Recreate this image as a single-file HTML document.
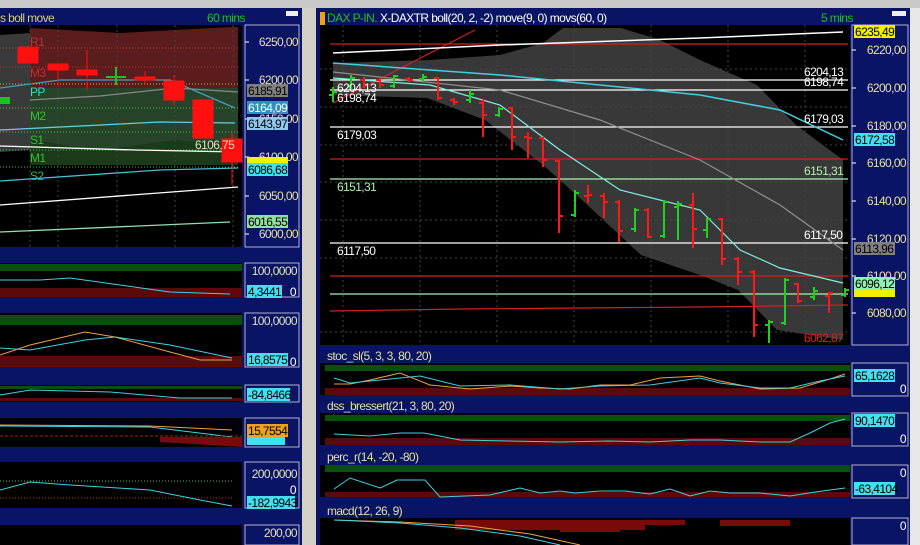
<!DOCTYPE html>
<html><head><meta charset="utf-8"><style>
html,body{margin:0;padding:0;background:#d4d0c8;width:920px;height:545px;overflow:hidden}
svg{display:block}
text{font-family:"Liberation Sans",Arial,sans-serif;font-size:12px;letter-spacing:-0.6px}
</style></head><body>
<svg width="920" height="545" viewBox="0 0 920 545" xmlns="http://www.w3.org/2000/svg">
<rect x="0" y="0" width="920" height="545" fill="#d4d0c8"/>
<rect x="0" y="0" width="920" height="8" fill="#c8c8c8"/>
<rect x="0" y="8" width="302" height="537" fill="#0a1464"/>
<rect x="316" y="8" width="594" height="537" fill="#0a1464"/>
<rect x="302" y="8" width="14" height="537" fill="#d4d0c8"/>
<rect x="910" y="8" width="10" height="537" fill="#e8e8e8"/>
<rect x="286" y="11" width="12" height="5" fill="#eee"/>
<rect x="892" y="11" width="14" height="5" fill="#eee"/>

<!-- LEFT MAIN -->
<text x="0" y="22" fill="#d8d070">s boll move</text>
<text x="207" y="22" fill="#20c020">60 mins</text>
<rect x="0" y="25" width="242" height="222" fill="#000"/>
<polygon points="0,35 30,33 30,150 0,152" fill="#3a3a3a"/>
<polygon points="30,28 120,33 175,30 232,27 238,27 238,88 30,88" fill="#5a1c1c"/>
<polygon points="30,88 238,88 238,165 30,165" fill="#27442a"/>
<polygon points="30,140 100,150 175,140 238,145 238,165 30,165" fill="#1a3a1a"/>
<g stroke="#444" stroke-dasharray="2,3">
<line x1="30" y1="25" x2="30" y2="247"/><line x1="58" y1="25" x2="58" y2="247"/><line x1="117" y1="25" x2="117" y2="247"/><line x1="175" y1="25" x2="175" y2="247"/><line x1="233" y1="25" x2="233" y2="247"/>
</g>
<g stroke-dasharray="1,2">
<line x1="0" y1="48" x2="240" y2="48" stroke="#c03030"/>
<line x1="0" y1="67" x2="240" y2="67" stroke="#c03030"/>
<line x1="0" y1="84" x2="240" y2="84" stroke="#c0c040"/>
<line x1="0" y1="108" x2="240" y2="108" stroke="#40c040"/>
<line x1="0" y1="132" x2="240" y2="132" stroke="#40c040"/>
<line x1="0" y1="150" x2="240" y2="150" stroke="#40c040"/>
<line x1="0" y1="167" x2="240" y2="167" stroke="#40c040"/>
</g>
<text x="30" y="46" fill="#c03030">R1</text>
<text x="30" y="77" fill="#c03030">M3</text>
<text x="30" y="96" fill="#40d0d0">PP</text>
<text x="30" y="120" fill="#30c030">M2</text>
<text x="30" y="144" fill="#30c030">S1</text>
<text x="30" y="162" fill="#30c030">M1</text>
<text x="30" y="180" fill="#30c030">S2</text>
<g fill="none" stroke-width="1.3">
<polyline points="0,88 60,80 170,80 235,108" stroke="#40a0c0"/>
<polyline points="30,100 100,96 175,88 238,92" stroke="#888"/>
<polyline points="0,130 160,122 235,123" stroke="#60d0e0"/>
<polyline points="0,146 135,150 238,152" stroke="#fff"/>
<polyline points="0,181 160,170 238,168" stroke="#40c0d0"/>
<polyline points="0,205 238,187" stroke="#fff"/>
<polyline points="0,232 230,222" stroke="#90e0b0"/>
</g>
<rect x="0" y="97" width="10" height="7" fill="#20c020"/>
<g fill="#ff1010" stroke="#ff1010">
<rect x="18" y="47" width="20" height="16"/>
<line x1="58" y1="64" x2="58" y2="85"/><rect x="48" y="64" width="20" height="6"/>
<line x1="87" y1="50" x2="87" y2="90"/><rect x="77" y="70" width="20" height="5"/>
<line x1="145" y1="71" x2="145" y2="85"/><rect x="135" y="77" width="20" height="3"/>
<line x1="174" y1="75" x2="174" y2="105"/><rect x="164" y="81" width="20" height="19"/>
<rect x="193" y="100" width="20" height="38"/>
<line x1="232" y1="133" x2="232" y2="185"/><rect x="222" y="139" width="20" height="23"/>
</g>
<g stroke="#20c020" stroke-width="2"><line x1="106" y1="77" x2="126" y2="77"/><line x1="116" y1="67" x2="116" y2="85"/></g>
<text x="195" y="149" fill="#e0e0c0">6106,75</text>
<rect x="245" y="25" width="54" height="222" fill="#0a1464" stroke="#b0b0d0"/>
<g stroke="#fff"><line x1="245" y1="42" x2="249" y2="42"/><line x1="245" y1="80" x2="249" y2="80"/><line x1="245" y1="119" x2="249" y2="119"/><line x1="245" y1="157" x2="249" y2="157"/><line x1="245" y1="196" x2="249" y2="196"/><line x1="245" y1="234" x2="249" y2="234"/></g>
<g fill="#e8e0a0" text-anchor="end"><text x="298" y="46">6250,00</text><text x="298" y="84">6200,00</text><text x="298" y="123">6150,00</text><text x="298" y="161">6100,00</text><text x="298" y="200">6050,00</text><text x="298" y="238">6000,00</text></g>
<rect x="247" y="84" width="41" height="13" fill="#808080"/><text x="248" y="95" fill="#000">6185,91</text>
<rect x="247" y="101" width="41" height="13" fill="#3090c0"/><text x="248" y="112" fill="#fff">6164,09</text>
<rect x="247" y="117" width="41" height="13" fill="#90c8f0"/><text x="248" y="128" fill="#000">6143,97</text>
<rect x="247" y="157" width="41" height="6" fill="#f0f000"/>
<rect x="247" y="163" width="41" height="13" fill="#40e0f0"/><text x="248" y="174" fill="#000">6086,68</text>
<rect x="247" y="215" width="41" height="13" fill="#90e0a0"/><text x="248" y="226" fill="#000">6016,55</text>

<!-- left subpanels -->
<rect x="0" y="263" width="242" height="34" fill="#000"/>
<rect x="0" y="264" width="242" height="7" fill="#0a500a"/><rect x="0" y="288" width="242" height="9" fill="#5a0a0a"/>
<polyline points="0,280 40,280 70,278 120,285 170,292 230,294" fill="none" stroke="#40d0e0"/>
<rect x="245" y="263" width="54" height="34" fill="#0a1464" stroke="#b0b0d0"/>
<text x="297" y="275" fill="#e0e0c0" text-anchor="end">100,0000</text>
<rect x="247" y="285" width="35" height="13" fill="#40e0f0"/><text x="248" y="296" fill="#000">4,3441</text><text x="296" y="296" fill="#fff" text-anchor="end">0</text>

<rect x="0" y="313" width="242" height="54" fill="#000"/>
<rect x="0" y="315" width="242" height="10" fill="#0a500a"/><rect x="0" y="356" width="242" height="11" fill="#5a0a0a"/>
<polyline points="0,355 30,345 85,332 115,337 170,352 200,360 232,360" fill="none" stroke="#f0a040"/>
<polyline points="0,348 30,350 85,340 115,337 170,345 232,358" fill="none" stroke="#40d0e0"/>
<rect x="245" y="313" width="54" height="54" fill="#0a1464" stroke="#b0b0d0"/>
<text x="297" y="325" fill="#e0e0c0" text-anchor="end">100,0000</text>
<rect x="247" y="353" width="41" height="13" fill="#40e0f0"/><text x="248" y="364" fill="#000">16,8575</text><text x="296" y="366" fill="#fff" text-anchor="end">0</text>

<rect x="0" y="385" width="242" height="17" fill="#000"/>
<rect x="0" y="386" width="242" height="3" fill="#0a500a"/><rect x="0" y="398" width="242" height="3" fill="#5a0a0a"/>
<polyline points="0,395 30,390 110,392 180,398 232,398" fill="none" stroke="#40d0e0"/>
<rect x="245" y="385" width="54" height="17" fill="#0a1464" stroke="#b0b0d0"/>
<rect x="247" y="388" width="43" height="13" fill="#40e0f0"/><text x="248" y="399" fill="#000">-84,8466</text>

<rect x="0" y="418" width="242" height="29" fill="#000"/>
<polyline points="0,425 150,426 232,430" fill="none" stroke="#f0a040"/>
<polyline points="0,426 150,427 232,437" fill="none" stroke="#40d0e0"/>
<line x1="0" y1="436" x2="242" y2="436" stroke="#a02020" stroke-dasharray="3,2"/>
<polygon points="160,437 242,437 242,447 160,442" fill="#7a0a0a"/>
<rect x="245" y="418" width="54" height="29" fill="#0a1464" stroke="#b0b0d0"/>
<rect x="247" y="424" width="41" height="13" fill="#f0a020"/><text x="248" y="435" fill="#000">15,7554</text>
<rect x="247" y="437" width="38" height="8" fill="#40e0f0"/>

<rect x="0" y="462" width="242" height="46" fill="#000"/>
<line x1="0" y1="481" x2="232" y2="481" stroke="#60c060" stroke-dasharray="1,2"/>
<line x1="0" y1="498" x2="232" y2="498" stroke="#c03030" stroke-dasharray="1,2"/>
<polyline points="0,490 30,482 70,485 150,490 200,500 232,506" fill="none" stroke="#40d0e0"/>
<rect x="245" y="462" width="54" height="46" fill="#0a1464" stroke="#b0b0d0"/>
<text x="297" y="478" fill="#e0e0c0" text-anchor="end">200,0000</text><text x="296" y="494" fill="#fff" text-anchor="end">0</text>
<rect x="247" y="496" width="48" height="13" fill="#40e0f0"/><text x="248" y="507" fill="#000">-182,9943</text>

<rect x="0" y="525" width="242" height="20" fill="#000"/>
<rect x="245" y="525" width="54" height="20" fill="#0a1464" stroke="#b0b0d0"/>
<text x="297" y="537" fill="#e0e0c0" text-anchor="end">200,00</text>

<!-- RIGHT MAIN -->
<rect x="320" y="12" width="5" height="13" fill="#f0a020"/>
<text x="327" y="22" fill="#20c020">DAX P-IN.</text><text x="380" y="22" fill="#fff">X-DAXTR boll(20, 2, -2) move(9, 0) movs(60, 0)</text>
<text x="821" y="22" fill="#20c020">5 mins</text>
<rect x="320" y="25" width="530" height="320" fill="#000"/>
<polygon points="333,63 430,60 500,55 543,43 563,28 600,28 621,28 660,40 700,60 757,85 796,125 843,160 843,340 777,330 738,290 700,275 641,255 582,200 543,165 485,120 427,98 333,95" fill="rgb(56,56,56)" style="fill:rgb(56,56,56)"/>
<g stroke="#444" stroke-dasharray="2,3">
<line x1="343" y1="25" x2="343" y2="345"/><line x1="420" y1="25" x2="420" y2="345"/><line x1="497" y1="25" x2="497" y2="345"/><line x1="574" y1="25" x2="574" y2="345"/><line x1="651" y1="25" x2="651" y2="345"/><line x1="728" y1="25" x2="728" y2="345"/><line x1="805" y1="25" x2="805" y2="345"/>
<line x1="320" y1="69" x2="850" y2="69"/><line x1="320" y1="107" x2="850" y2="107"/><line x1="320" y1="145" x2="850" y2="145"/><line x1="320" y1="182" x2="850" y2="182"/><line x1="320" y1="220" x2="850" y2="220"/><line x1="320" y1="258" x2="850" y2="258"/><line x1="320" y1="332" x2="850" y2="332"/>
</g>
<g fill="none" stroke-width="1.2">
<line x1="330" y1="44" x2="848" y2="44" stroke="#d02020"/>
<line x1="330" y1="80" x2="848" y2="80" stroke="#fff"/>
<line x1="330" y1="90" x2="848" y2="90" stroke="#fff"/>
<line x1="330" y1="127" x2="848" y2="127" stroke="#fff"/>
<line x1="330" y1="159" x2="848" y2="159" stroke="#d02020"/>
<line x1="330" y1="179" x2="848" y2="179" stroke="#b0f0b0"/>
<line x1="330" y1="243" x2="848" y2="243" stroke="#fff"/>
<line x1="330" y1="276" x2="848" y2="276" stroke="#d02020"/>
<line x1="330" y1="294" x2="848" y2="294" stroke="#b0f0b0"/>
<polyline points="330,311 460,309 700,307 848,305" stroke="#d02020"/>
<line x1="333" y1="103" x2="475" y2="30" stroke="#d02020"/>
<polyline points="333,53 500,45 700,38 843,32" stroke="#fff" stroke-width="1.5"/>
<polyline points="333,63 500,75 700,95 780,110 843,140" stroke="#40d0e0" stroke-width="1.5"/>
<polyline points="333,72 500,90 600,120 700,160 780,205 843,250" stroke="#909090"/>
<polyline points="333,78 430,85 500,105 560,150 620,190 700,210 740,250 780,268 843,283" stroke="#80f0e0"/>
</g>
<g stroke-width="2" fill="none">
<g stroke="#20d020">
<path d="M333 87V102M329 95h4M333 92h4"/><path d="M351 75V90M347 86h4M351 78h4"/><path d="M394 75V88M390 86h4M394 76h4"/><path d="M423 74V82M419 79h4M423 77h4"/><path d="M470 90V103M466 100h4M470 94h4"/><path d="M499 107V117M495 115h4M499 109h4"/><path d="M575 190V217M571 215h4M575 193h4"/><path d="M635 208V232M631 229h4M635 210h4"/><path d="M664 200V238M660 236h4M664 202h4"/><path d="M678 201V240M674 207h4M678 204h4"/><path d="M707 218V238M703 230h4M707 219h4"/><path d="M769 320V343M765 325h4M769 322h4"/><path d="M785 278V325M781 323h4M785 280h4"/><path d="M814 287V300M810 297h4M814 291h4"/><path d="M845 288V297M841 295h4M845 290h4"/>
</g>
<g stroke="#ff1818">
<path d="M364 77V88M360 80h4M364 85h4"/><path d="M380 78V88M376 80h4M380 85h4"/><path d="M409 77V82M405 79h4M409 80h4"/><path d="M438 77V100M434 78h4M438 98h4"/><path d="M454 98V105M450 100h4M454 102h4"/><path d="M483 100V137M479 103h4M483 115h4"/><path d="M512 107V150M508 108h4M512 137h4"/><path d="M528 132V158M524 137h4M528 138h4"/><path d="M543 137V167M539 138h4M543 160h4"/><path d="M559 160V233M555 161h4M559 216h4"/><path d="M588 185V203M584 196h4M588 195h4"/><path d="M604 193V218M600 196h4M604 202h4"/><path d="M619 200V242M615 202h4M619 231h4"/><path d="M648 208V238M644 210h4M648 237h4"/><path d="M693 193V248M689 205h4M693 229h4"/><path d="M722 218V265M718 219h4M722 259h4"/><path d="M738 257V285M734 259h4M738 272h4"/><path d="M754 270V337M750 272h4M754 325h4"/><path d="M798 283V303M794 284h4M798 301h4"/><path d="M829 292V313M825 296h4M829 293h4"/>
</g>
</g>
<g fill="#fff"><text x="337" y="92">6204,13</text><text x="337" y="102">6198,74</text><text x="337" y="139">6179,03</text><text x="804" y="76">6204,13</text><text x="804" y="86">6198,74</text><text x="804" y="123">6179,03</text><text x="337" y="255">6117,50</text><text x="804" y="239">6117,50</text></g>
<g fill="#b0f0b0"><text x="337" y="191">6151,31</text><text x="804" y="175">6151,31</text></g>
<text x="804" y="342" fill="#e02020">6062,87</text>
<rect x="852" y="25" width="56" height="320" fill="#0a1464" stroke="#b0b0d0"/>
<g stroke="#fff"><line x1="852" y1="50" x2="856" y2="50"/><line x1="852" y1="88" x2="856" y2="88"/><line x1="852" y1="126" x2="856" y2="126"/><line x1="852" y1="163" x2="856" y2="163"/><line x1="852" y1="201" x2="856" y2="201"/><line x1="852" y1="239" x2="856" y2="239"/><line x1="852" y1="276" x2="856" y2="276"/><line x1="852" y1="313" x2="856" y2="313"/></g>
<g fill="#e8e0a0" text-anchor="end"><text x="906" y="54">6220,00</text><text x="906" y="92">6200,00</text><text x="906" y="130">6180,00</text><text x="906" y="167">6160,00</text><text x="906" y="205">6140,00</text><text x="906" y="243">6120,00</text><text x="906" y="280">6100,00</text><text x="906" y="317">6080,00</text></g>
<rect x="854" y="25" width="41" height="13" fill="#f0f000"/><text x="855" y="36" fill="#000">6235,49</text>
<rect x="854" y="133" width="41" height="13" fill="#40e0f0"/><text x="855" y="144" fill="#000">6172,58</text>
<rect x="854" y="242" width="41" height="13" fill="#808080"/><text x="855" y="253" fill="#000">6113,96</text>
<rect x="854" y="285" width="41" height="12" fill="#f0f000"/>
<rect x="854" y="277" width="41" height="13" fill="#90f0b0"/><text x="855" y="288" fill="#000">6096,12</text>

<!-- right subpanels -->
<text x="327" y="360" fill="#e0e0a0">stoc_sl(5, 3, 3, 80, 20)</text>
<rect x="320" y="363" width="530" height="32" fill="#000"/>
<rect x="325" y="365" width="525" height="6" fill="#0a500a"/><rect x="325" y="388" width="525" height="7" fill="#5a0a0a"/>
<polyline points="334,384 350,384 370,380 400,373 430,385 470,389 510,386 540,388 570,389 600,385 630,385 660,378 700,376 720,381 760,389 800,388 830,379 845,374" fill="none" stroke="#f0a040"/>
<polyline points="334,378 350,383 380,380 420,376 460,386 510,385 560,389 600,386 650,385 700,378 720,383 760,388 790,388 820,381 845,376" fill="none" stroke="#40d0e0"/>
<rect x="852" y="363" width="56" height="33" fill="#0a1464" stroke="#b0b0d0"/>
<rect x="854" y="369" width="41" height="13" fill="#40e0f0"/><text x="855" y="380" fill="#000">65,1628</text><text x="906" y="393" fill="#fff" text-anchor="end">0</text>

<text x="327" y="410" fill="#e0e0a0">dss_bressert(21, 3, 80, 20)</text>
<rect x="320" y="413" width="530" height="32" fill="#000"/>
<rect x="325" y="415" width="525" height="6" fill="#0a500a"/><rect x="325" y="438" width="525" height="7" fill="#5a0a0a"/>
<polyline points="334,434 370,436 400,433 424,433 460,440 560,442 610,441 650,442 690,440 720,440 760,442 790,442 810,433 830,423 845,419" fill="none" stroke="#40d0e0"/>
<rect x="852" y="413" width="56" height="33" fill="#0a1464" stroke="#b0b0d0"/>
<rect x="854" y="414" width="41" height="13" fill="#40e0f0"/><text x="855" y="425" fill="#000">90,1470</text><text x="906" y="443" fill="#fff" text-anchor="end">0</text>

<text x="327" y="461" fill="#e0e0a0">perc_r(14, -20, -80)</text>
<rect x="320" y="465" width="530" height="32" fill="#000"/>
<rect x="325" y="465" width="525" height="7" fill="#0a500a"/><rect x="325" y="492" width="525" height="5" fill="#5a0a0a"/>
<polyline points="334,489 350,478 380,488 397,480 425,480 440,497 490,495 520,488 540,493 560,491 575,493 600,491 625,491 650,494 670,489 690,496 710,491 730,493 760,493 790,496 815,492 830,490 845,488" fill="none" stroke="#40d0e0"/>
<rect x="852" y="465" width="56" height="33" fill="#0a1464" stroke="#b0b0d0"/>
<text x="906" y="477" fill="#fff" text-anchor="end">0</text>
<rect x="854" y="482" width="41" height="13" fill="#40e0f0"/><text x="855" y="493" fill="#000">-63,4104</text>

<text x="327" y="515" fill="#e0e0a0">macd(12, 26, 9)</text>
<rect x="320" y="518" width="530" height="27" fill="#000"/>
<g fill="#7a0a0a"><rect x="455" y="520" width="190" height="10"/><rect x="560" y="520" width="60" height="12"/><rect x="645" y="520" width="40" height="5"/><rect x="720" y="520" width="70" height="6"/></g>
<polyline points="334,520 400,522 470,526 530,534 580,545" fill="none" stroke="#f0a040"/>
<polyline points="334,520 400,523 460,528 520,536 560,545" fill="none" stroke="#40d0e0"/>
<rect x="852" y="518" width="56" height="27" fill="#0a1464" stroke="#b0b0d0"/>
<text x="906" y="530" fill="#fff" text-anchor="end">0</text>
</svg>
</body></html>
